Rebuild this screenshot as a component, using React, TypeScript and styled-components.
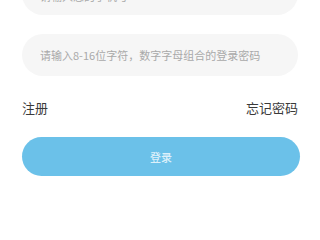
import styled, { createGlobalStyle } from "styled-components";

const GlobalStyle = createGlobalStyle`
  html, body {
    margin: 0;
    padding: 0;
    background-color: #ffffff;
    font-family: "Noto Sans CJK SC", "Liberation Sans", sans-serif;
  }
  * {
    box-sizing: border-box;
  }
`;

const App = (): JSX.Element => {
  return (
    <>
      <GlobalStyle />
      <LoginForm>
        <FieldTop>
          <Field placeholder="请输入您的手机号" />
        </FieldTop>
        <FieldBox>
          <Field type="password" placeholder="请输入8-16位字符，数字字母组合的登录密码" />
        </FieldBox>
        <LinkRow>
          <LinkText>注册</LinkText>
          <LinkText>忘记密码</LinkText>
        </LinkRow>
        <LoginBtn>登录</LoginBtn>
      </LoginForm>
    </>
  );
};

export default App;

const LoginForm = styled.main`
  width: 320px;
  height: 200px;
  overflow: hidden;
  display: flex;
  flex-direction: column;
  padding: 0 21px 0 22px;
`;

const FieldBox = styled.div`
  width: 276px;
  height: 42px;
  flex-shrink: 0;
  border-radius: 21px;
  background-color: #f6f6f6;
  display: flex;
  align-items: center;
  padding: 0 18px;
  margin-top: 19px;
`;

const FieldTop = styled(FieldBox)`
  margin-top: -27px;
  padding-top: 4px;
`;

const Field = styled.input`
  width: 100%;
  border: none;
  outline: none;
  background: transparent;
  padding: 0;
  font-family: "Noto Sans CJK SC", "Liberation Sans", sans-serif;
  font-size: 11px;
  color: #333333;

  &::placeholder {
    color: #a9a9a9;
  }
`;

const LinkRow = styled.div`
  display: flex;
  justify-content: space-between;
  align-items: center;
  margin-top: 24px;
  height: 16px;
  padding-right: 1px;
`;

const LinkText = styled.div`
  font-size: 13px;
  line-height: 16px;
  color: #3a3a3a;
`;

const LoginBtn = styled.button`
  width: 278px;
  height: 39px;
  flex-shrink: 0;
  margin-top: 21px;
  border: none;
  border-radius: 20px;
  background-color: #6bc1e9;
  color: #dcf0fa;
  font-family: "Noto Sans CJK SC", "Liberation Sans", sans-serif;
  font-size: 11px;
  font-weight: 500;
  padding: 0;
`;
